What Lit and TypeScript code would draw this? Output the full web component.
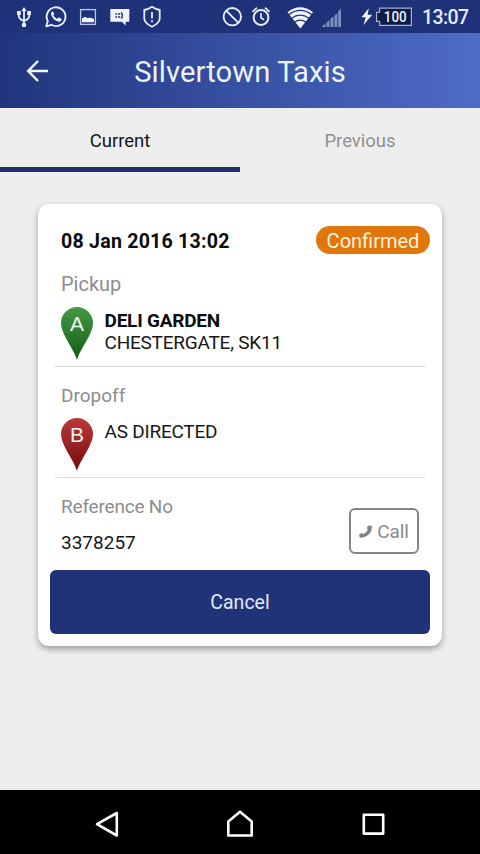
import { LitElement, html, css } from "lit";
import { customElement, property } from "lit/decorators.js";

@customElement("status-bar")
class StatusBar extends LitElement {
  static styles = css`
    :host { display: block; height: 33px; background: #1f3279; }
    svg { display: block; }
    .num { font: 500 14px Roboto, sans-serif; fill: #eaf2ff; }
    .time { font: 500 19.5px Roboto, sans-serif; fill: #e4ecff; }
  `;
  render() {
    return html`<svg width="480" height="33" viewBox="0 0 480 33" fill="none" stroke="#e6eeff">
      <!-- usb -->
      <g stroke-width="1.8">
        <path d="M24 9v16M18.8 13v3q0 3 5.2 5M29.2 13v3q0 3-5.2 5" />
        <path d="M24 7l-2.6 4h5.2z" fill="#e6eeff" stroke="none" />
        <path d="M17 11h3.8v4H17zM27.2 11H31v4h-3.8z" fill="#e6eeff" stroke="none" />
        <circle cx="24" cy="25" r="2.3" fill="#e6eeff" stroke="none" />
      </g>
      <!-- chat handset -->
      <path d="M46.300 26.300l1.500-5.200a9.400 9.400 0 1 1 3.600 3.700z" stroke-width="1.900" stroke-linejoin="round" />
      <path d="M52.600 11.300c-2 .9-2 3.100-.7 5.300 1.600 2.800 4 4.700 6.800 5.100 1.700.1 3.200-1.200 3-2.800l-2.900-1.600-1.600 1.600c-1.900-.8-3.100-2-3.900-3.800l1.200-1.400z" fill="#e6eeff" stroke="none" />
      <!-- picture -->
      <rect x="80.600" y="9.600" width="14.800" height="14.800" stroke-width="1.300" stroke="#b9c7ec" />
      <path d="M82 22.300v-3.800l3-1.800 2.600 1.600 2.200-.9 4.200 1.600v3.300z" fill="#f3f7ff" stroke="none" />
      <!-- message -->
      <path d="M110.300 9h19v12.800h-3.600v3.600l-4-3.600h-11.400z" fill="#f0f5ff" stroke="none" />
      <path d="M115.300 14h1.700M115.300 17h1.700M118 14h2.200M118 17h2.200M121.300 12.300q2.200 3.200 0 6.400" stroke="#1f3279" stroke-width="1.400" />
      <!-- shield -->
      <path d="M152 6.800q3.500 2.500 7.700 3.200v8.500q0 4.300-7.700 8.300-7.700-4-7.700-8.300V10q4.200-.7 7.700-3.200z" stroke-width="1.800" />
      <path d="M152 12v6.500M152 20.300v2" stroke-width="1.800" />
      <!-- blocked -->
      <circle cx="232.300" cy="16.700" r="8.700" stroke-width="1.900" />
      <path d="M226.200 10.600l12.200 12.200" stroke-width="1.900" />
      <!-- alarm -->
      <circle cx="261" cy="17.500" r="7.400" stroke-width="2" />
      <path d="M261 13.300v4.500l3 2M252.400 11.800l4.600-4.100M269.600 11.800l-4.600-4.100" stroke-width="1.800" />
      <!-- wifi -->
      <path d="M287.500 12.200Q300.300 2.200 313 12.200L300.300 28.400z" fill="#f0f5ff" stroke="none" />
      <path d="M288.500 14.800q11.800-9 23.600 0M291.300 18.500q9-6.700 18 0M294.500 22.300q5.800-4.400 11.600 0" stroke="#1f3279" stroke-width="1.300" />
      <!-- signal -->
      <path d="M321.500 27l4-3.500V27zM326.500 22.500l3-2.500v7h-3zM330.500 19l3-2.700V27h-3zM334.500 15.500l2.800-2.500v14h-2.800zM338.200 11.500l2.800-3.200V27h-2.800z" fill="#7f8fc2" stroke="none" />
      <!-- charge -->
      <path d="M368.800 8.300l-7.300 9h4.200l-2.200 7.700 8.700-10.200h-4.600z" fill="#f0f5ff" stroke="none" />
      <path d="M379.600 8.100h31.800v17.200h-31.800v-4h-3v-9h3z" fill="#101b45" stroke="#a4aecf" stroke-width="1.200" />
      <text class="num" x="383.800" y="21.800" stroke="none" textLength="22.800" lengthAdjust="spacingAndGlyphs">100</text>
      <text class="time" x="422" y="24" stroke="none" textLength="47">13:07</text>
    </svg>`;
  }
}

@customElement("app-bar")
class AppBar extends LitElement {
  static styles = css`
    :host {
      display: grid; grid-template-columns: 75px 1fr 75px; align-items: center;
      height: 75px; color: #eaf3ff;
      background: linear-gradient(90deg, #20357b 0%, #4e6bc7 100%);
    }
    .back { margin-left: 26px; display: block; }
    h1 { margin: 3px 0 0; font: 400 29.2px/34px Roboto, sans-serif; letter-spacing: 0.07px; text-align: center; white-space: nowrap; }
  `;
  render() {
    return html`
      <svg class="back" width="23" height="22" viewBox="0 0 23 22" fill="none" stroke="#f2f8ff" stroke-width="2.500">
        <path d="M22 11H2.500M12 1L2.200 11l9.800 10" />
      </svg>
      <h1>Silvertown Taxis</h1>`;
  }
}

@customElement("map-pin")
class MapPin extends LitElement {
  @property() letter = "A";
  @property() top = "";
  @property() bottom = "";
  static styles = css`
    :host { display: block; width: 32px; height: 53px; }
    svg { display: block; }
    text { font: 400 21px "Liberation Sans", sans-serif; fill: #f4f8f4; text-anchor: middle; }
  `;
  render() {
    return html`<svg width="32" height="53" viewBox="0 0 32 53">
      <defs>
        <linearGradient id="g" x1="0" y1="0" x2="0" y2="1">
          <stop offset="0" stop-color=${this.top} />
          <stop offset="1" stop-color=${this.bottom} />
        </linearGradient>
      </defs>
      <path d="M16 53C13.500 43 0 27 0 16A16 16 0 0 1 32 16C32 27 18.500 43 16 53z" fill="url(#g)" />
      <text x="16" y="23.800">${this.letter}</text>
    </svg>`;
  }
}

@customElement("booking-card")
class BookingCard extends LitElement {
  static styles = css`
    :host {
      display: flex; flex-direction: column; box-sizing: border-box;
      width: 404px; height: 442px; padding: 22px 12px 12px; border-radius: 11px;
      background: #fff; color: #161616; font: 400 19px/22px Roboto, sans-serif;
      box-shadow: 0 3px 6px rgba(0, 0, 0, 0.35);
    }
    .head { display: flex; justify-content: space-between; height: 28px; padding-left: 11px; }
    .date { font-weight: 700; font-size: 19.6px; letter-spacing: 0.22px; line-height: 32px; color: #0b0b0b; }
    .badge {
      box-sizing: border-box; width: 114px; height: 28px; border-radius: 14px; text-align: center;
      background: #e0770d; color: #fff0d8; font-size: 20px; line-height: 30px;
    }
    .stop { box-sizing: border-box; height: 111px; margin: 0 5px; padding: 18px 0 0 6px; border-bottom: 1px solid #dadada; }
    .first { height: 113px; padding-top: 20px; }
    .label { color: #8d8d8d; height: 22px; }
    .first .label { font-size: 20px; line-height: 20px; }
    .place { display: flex; gap: 11.5px; margin-top: 11px; letter-spacing: -0.22px; }
    .lines { padding-top: 3px; }
    .name { font-weight: 700; color: #0b0b0b; }
    .ref { display: flex; justify-content: space-between; height: 92px; padding: 0 11px; }
    .refs { padding-top: 17.5px; }
    .refs .label { letter-spacing: -0.2px; }
    .number { margin-top: 14px; }
    .call {
      display: flex; align-items: center; justify-content: center; gap: 5px; box-sizing: border-box;
      width: 70px; height: 46px; margin-top: 30px; border: 2px solid #858585; border-radius: 6px; color: #8a8a8a;
    }
    .call span { padding-top: 2px; letter-spacing: -0.1px; }
    .cancel {
      height: 64px; border-radius: 6px; background: #203379; color: #e0e9ff;
      font-size: 19.5px; line-height: 66px; text-align: center;
    }
  `;
  render() {
    return html`
      <div class="head">
        <div class="date">08 Jan 2016 13:02</div>
        <div class="badge">Confirmed</div>
      </div>
      <div class="stop first">
        <div class="label">Pickup</div>
        <div class="place">
          <map-pin letter="A" top="#459a45" bottom="#145a18"></map-pin>
          <div class="lines"><div class="name">DELI GARDEN</div><div>CHESTERGATE, SK11</div></div>
        </div>
      </div>
      <div class="stop">
        <div class="label">Dropoff</div>
        <div class="place">
          <map-pin letter="B" top="#b83b3b" bottom="#74090c"></map-pin>
          <div class="lines"><div>AS DIRECTED</div></div>
        </div>
      </div>
      <div class="ref">
        <div class="refs"><div class="label">Reference No</div><div class="number">3378257</div></div>
        <div class="call">
          <svg width="13" height="13" viewBox="0 0 13 13">
            <path d="M8.400 1.200Q10.800 0 12.700 0.700Q13.600 5.500 10.200 9Q6.200 12.900 1 12.800Q0 11.500 0.300 9.200Q2.500 7.700 4.600 8.900Q7.600 7.700 8.700 5Q7.800 3 8.400 1.200z" fill="#808080" />
          </svg>
          <span>Call</span>
        </div>
      </div>
      <div class="cancel">Cancel</div>`;
  }
}

@customElement("app-root")
class AppRoot extends LitElement {
  static styles = css`
    :host { display: flex; flex-direction: column; width: 480px; height: 854px; background: #eee; overflow: hidden; }
    .tabs { display: flex; height: 64px; font: 400 18.5px/66px Roboto, sans-serif; text-align: center; }
    .tab { flex: 1; box-sizing: border-box; height: 64px; color: #919191; }
    .active { color: #161616; border-bottom: 5px solid #203070; }
    .content { flex: 1; padding: 32px 38px 0; }
    .nav { height: 64px; background: #000; }
    .nav svg { display: block; }
  `;
  render() {
    return html`
      <status-bar></status-bar>
      <app-bar></app-bar>
      <div class="tabs">
        <div class="tab active">Current</div>
        <div class="tab">Previous</div>
      </div>
      <div class="content"><booking-card></booking-card></div>
      <div class="nav">
        <svg width="480" height="64" viewBox="0 0 480 64" fill="none" stroke="#fff" stroke-width="2.600" stroke-linejoin="round">
          <path d="M116.800 23v22.500L97 34.200z" />
          <path d="M228.300 31.500L240 21.800l11.700 9.700v14h-23.400z" />
          <path d="M363.800 24.800h19.400v18.800h-19.400z" />
        </svg>
      </div>`;
  }
}
